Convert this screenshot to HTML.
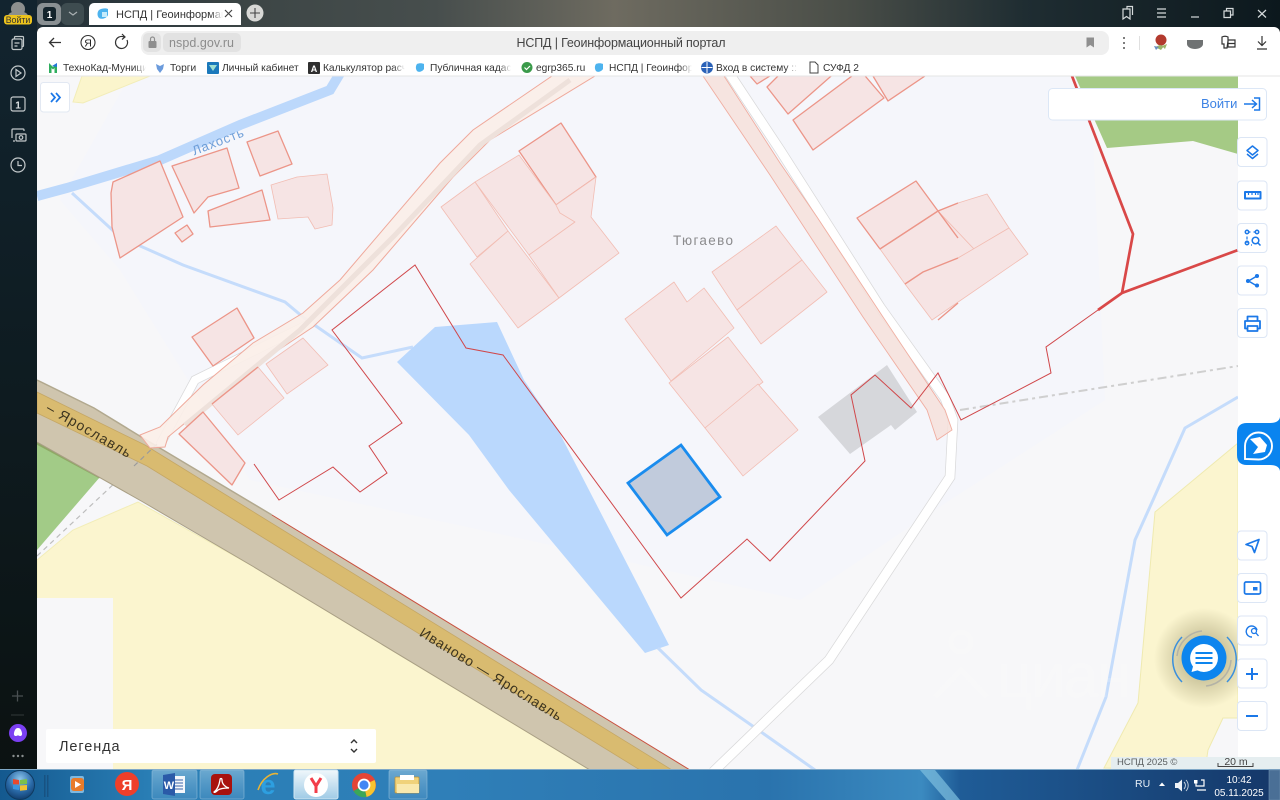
<!DOCTYPE html>
<html><head><meta charset="utf-8"><title>НСПД | Геоинформационный портал</title>
<style>
html,body{margin:0;padding:0;width:1280px;height:800px;overflow:hidden;background:#000}
svg{position:absolute;left:0;top:0;display:block}
text{font-family:"Liberation Sans","Noto Sans CJK SC",sans-serif}
</style></head><body>
<svg width="1280" height="800" viewBox="0 0 1280 800" xmlns="http://www.w3.org/2000/svg">
<defs>
<linearGradient id="top" x1="0" x2="1" y1="0" y2="0">
<stop offset="0" stop-color="#1c2a33"/><stop offset=".2" stop-color="#3d4646"/><stop offset=".34" stop-color="#474e4d"/><stop offset=".48" stop-color="#6e6b60"/><stop offset=".66" stop-color="#4a4e48"/><stop offset=".8" stop-color="#1f2d32"/><stop offset="1" stop-color="#0c181d"/>
</linearGradient>
<linearGradient id="side" x1="0" x2="0" y1="0" y2="1">
<stop offset="0" stop-color="#12242f"/><stop offset=".5" stop-color="#0e1b20"/><stop offset="1" stop-color="#0b1110"/>
</linearGradient>
<linearGradient id="task" x1="0" x2="1" y1="0" y2="0">
<stop offset="0" stop-color="#14598f"/><stop offset=".12" stop-color="#2a7fb6"/><stop offset=".35" stop-color="#2f7fb8"/><stop offset=".6" stop-color="#2a73ad"/><stop offset=".72" stop-color="#3b8ac0"/><stop offset=".75" stop-color="#1f5c97"/><stop offset=".88" stop-color="#1a4a80"/><stop offset="1" stop-color="#153768"/>
</linearGradient>
<linearGradient id="fade" x1="0" x2="1" y1="0" y2="0"><stop offset="0" stop-color="#fff" stop-opacity="0"/><stop offset="1" stop-color="#fff"/></linearGradient>
<linearGradient id="btn" x1="0" x2="0" y1="0" y2="1"><stop offset="0" stop-color="#8fc0de" stop-opacity=".65"/><stop offset="1" stop-color="#4f93c4" stop-opacity=".5"/></linearGradient>
<linearGradient id="btnW" x1="0" x2="0" y1="0" y2="1"><stop offset="0" stop-color="#f0f7fb"/><stop offset="1" stop-color="#9fcbe6"/></linearGradient>
<radialGradient id="orb" cx=".5" cy=".3" r=".7"><stop offset="0" stop-color="#8ec6ec"/><stop offset=".6" stop-color="#2a6aa8"/><stop offset="1" stop-color="#123f70"/></radialGradient>
<radialGradient id="glow"><stop offset=".45" stop-color="#6b6233" stop-opacity=".3"/><stop offset="1" stop-color="#6b6233" stop-opacity="0"/></radialGradient>
<clipPath id="map"><rect x="37" y="76" width="1201" height="694"/></clipPath>
</defs>

<!-- chrome -->
<rect width="1280" height="30" fill="url(#top)"/>
<rect x="0" y="0" width="37" height="800" fill="url(#side)"/>

<!-- MAP -->
<rect x="37" y="76" width="1243" height="694" fill="#f7f7f9"/>
<g clip-path="url(#map)">
<polygon points="130,76 1090,76 1105,400 950,500 800,600 620,560 250,480 120,270 60,200" fill="#f5f6fb"/>
<!-- yellow -->
<polygon points="82,76 73,102 83,103 150,76" fill="#fbf5cc" stroke="#f2edb8" stroke-width="1"/>
<polygon points="37,560 73,530 138,502 254,567 590,770 37,770" fill="#fbf5cf" stroke="#f2edb8" stroke-width="1"/>
<rect x="37" y="598" width="76" height="172" fill="#f7f7f9"/>
<polygon points="1238,443 1155,512 1138,703 1104,768 1205,770 1208,750 1223,718 1238,718" fill="#fbf5cf" stroke="#efeab0" stroke-width="1"/>
<!-- green -->
<polygon points="37,443 100,477 37,550" fill="#a2cb87"/>
<polyline points="37,443 100,477" fill="none" stroke="#8fa866" stroke-width="3"/>
<polygon points="1075,76 1107,148 1193,141 1238,154 1238,76" fill="#a5ca85"/>
<!-- water -->
<polyline points="72,193 120,237 183,265 285,302 303,317 362,358 413,347" fill="none" stroke="#c5dcfb" stroke-width="3"/>
<polyline points="37,196 67,188 160,160 240,125 330,90 342,70" fill="none" stroke="#bcd8fb" stroke-width="10"/>
<polygon points="397,362 435,327 497,322 524,380 558,430 669,645 645,653 509,490 469,435" fill="#bad8fd"/>
<polyline points="658,648 701,690 754,727 815,770" fill="none" stroke="#c5dcfb" stroke-width="3"/>
<polyline points="1238,397 1185,428 1153,500 1135,540 1106,697 1077,770" fill="none" stroke="#c5dcfb" stroke-width="3"/>
<!-- dashed -->
<polyline points="960,410 1238,366" fill="none" stroke="#cfcfcf" stroke-width="2" stroke-dasharray="9 4 3 4"/>
<polyline points="37,556 134,465" fill="none" stroke="#bdbdbd" stroke-width="1.2" stroke-dasharray="5 4"/>
<!-- roads white -->
<polyline points="727,70 780,150 880,307 945,398 953,420 950,477 829,660 713,772" fill="none" stroke="#d9d9da" stroke-width="10.500"/>
<polyline points="727,70 780,150 880,307 945,398 953,420 950,477 829,660 713,772" fill="none" stroke="#fff" stroke-width="9"/>
<polyline points="160,445 195,380 313,322" fill="none" stroke="#d9d9da" stroke-width="9.500"/>
<polyline points="160,445 195,380 313,322" fill="none" stroke="#fff" stroke-width="8"/>
<!-- Highway -->
<polygon points="37,380 94,408 143,438 272,515 690,770 590,770 254,567 143,502 37,442" fill="#cfc5ae"/>
<polygon points="37,392 145,445 672,770 640,770 147,466 37,413" fill="#d9bb70" stroke="#c5a765" stroke-width=".8"/>
<polyline points="37,380 94,408 143,438 272,515" fill="none" stroke="#b2a98f" stroke-width="1.5"/>
<polyline points="37,442 143,502 254,567 590,770" fill="none" stroke="#a99f85" stroke-width="1"/>
<polyline points="272,515 690,770" fill="none" stroke="#c9503f" stroke-width="1"/>
<polyline points="134,466 157,444" fill="none" stroke="#9b9b9b" stroke-width="1.2" stroke-dasharray="5 4"/>
<!-- pink bands -->
<polygon points="140,435 160,427 203,385 253,343 303,313 340,280 440,163 473,130 552,76 595,76 490,140 453,177 373,270 313,327 253,367 168,437 165,447 150,448" fill="#fbeee8" fill-opacity=".9" stroke="#efa99b" stroke-width="1"/>
<polyline points="185,425 300,330 395,235 480,145 570,80" fill="none" stroke="#eee1db" stroke-width="5"/>
<polygon points="703,76 770,175 817,247 863,317 927,410 937,440 952,430 945,410 883,317 817,217 780,163 724,76" fill="#f6e0db" fill-opacity=".85" stroke="#f0aea1" stroke-width=".9"/>
<!-- plots -->
<g fill="#f6e4e4" stroke="#ec9588" stroke-width="1.300" stroke-linejoin="round">
<polygon points="113,182 160,161 183,217 120,258 112,227 111,193"/>
<polygon points="172,166 227,148 239,188 208,197 194,213"/>
<polygon points="247,142 278,131 292,164 260,176"/>
<polygon points="175,233 187,225 193,234 182,242"/>
<polygon points="208,211 262,190 270,220 210,227"/>
<polygon points="192,337 237,308 254,338 213,366"/>
<polygon points="179,434 203,412 245,463 232,485"/>
<polygon points="519,151 561,123 596,177 556,205"/>
<polygon points="857,218 916,181 938,211 880,249"/>
<polygon points="767,87 784,70 838,70 788,114"/>
<polygon points="793,120 860,70 884,98 813,150"/>
<polygon points="873,76 888,101 925,76"/>
<polygon points="750,76 757,84 770,76"/>
</g>
<g fill="#f6e4e4" stroke="#f2bdb3" stroke-width=".8" stroke-linejoin="round">
<polygon points="271,185 297,177 327,174 333,208 332,225 315,229 308,217 278,219"/>
<polygon points="212,404 258,367 284,398 238,435"/>
<polygon points="266,364 303,338 328,365 287,394"/>
<polygon points="475,182 519,155 556,205 560,213 567,210 575,222 529,255"/>
<polygon points="441,207 475,182 508,231 477,257"/>
<polygon points="470,264 508,231 559,298 518,328"/>
<polygon points="575,222 560,213 556,205 596,177 591,217 619,253 559,298 529,255"/>
<polygon points="625,319 674,282 687,302 704,288 734,328 671,381"/>
<polygon points="669,383 728,337 763,382 705,428"/>
<polygon points="705,428 758,384 798,430 743,476"/>
<polygon points="712,272 776,226 802,260 737,310"/>
<polygon points="737,310 802,260 827,292 761,344"/>
<polygon points="880,249 938,211 974,249 958,258 923,272 905,284"/>
<polygon points="938,211 958,203 987,194 1009,228 974,249"/>
<polygon points="905,284 923,272 958,258 1009,228 1028,254 932,320"/>
</g>
<g fill="none" stroke="#ec9588" stroke-width="1.400">
<polyline points="880,249 938,211 958,203"/>
<polyline points="938,211 958,238"/>
<polyline points="905,284 923,272 958,258"/>
<polyline points="938,320 958,303"/>
<polyline points="212,404 258,367"/>
</g>
<!-- gray building -->
<polygon points="818,417 887,365 917,412 895,430 891,425 850,454" fill="#d6d7db"/>
<!-- red -->
<g fill="none" stroke="#d0474a" stroke-width="1" stroke-linejoin="miter">
<polyline points="254,464 279,500 333,467 360,492 387,473 369,446 402,423 332,330 415,265 466,348 503,355 681,598 747,539 770,561 865,461 851,395 875,375 911,408 938,373 961,420 1051,373 1046,347 1098,310"/>
</g>
<g fill="none" stroke="#d94848" stroke-width="2.700" stroke-linejoin="miter">
<polyline points="1098,310 1122,293 1238,250"/>
<polyline points="1122,293 1133,234 1072,76"/>
</g>
<!-- selected -->
<polygon points="628,483 681,445 720,497 667,535" fill="#c1cbdc" stroke="#1a8cee" stroke-width="2.800" stroke-linejoin="miter"/>
<!-- watermark -->
<text x="997" y="697" font-size="62" fill="#fff" opacity=".14" textLength="134">циан</text>
<path d="M935 697l26-27 26 27M961 632a10 10 0 1 1-.01 0" fill="none" stroke="#fff" stroke-width="5" opacity=".12"/>
<!-- labels -->
<text x="218" y="146" font-size="13" fill="#6e9ed8" text-anchor="middle" transform="rotate(-21 218 142)" textLength="54">Лахость</text>
<text x="703" y="245" font-size="13.500" fill="#8b8b8d" text-anchor="middle" textLength="60">Тюгаево</text>
<text x="89" y="435" font-size="14" fill="#3d3520" text-anchor="middle" transform="rotate(30 89 430)" textLength="95">– Ярославль</text>
<text x="491" y="679" font-size="14" fill="#3d3520" text-anchor="middle" transform="rotate(31.600 491 674)" textLength="164">Иваново — Ярославль</text>
<circle cx="1204" cy="658" r="50" fill="url(#glow)"/>
</g>

<!-- Right white column -->
<rect x="1238" y="76" width="42" height="694" fill="#fff"/>
<!-- scale strip -->
<rect x="1111" y="757" width="169" height="13" fill="#e5eef0"/>
<text x="1117" y="765" font-size="9.500" fill="#5a5f60">НСПД 2025 ©</text>
<text x="1236" y="765" font-size="10.500" fill="#444" text-anchor="middle">20 m</text>
<path d="M1218 763v3.500h35v-3.500" fill="none" stroke="#444" stroke-width="1"/>

<!-- Login panel -->
<rect x="1048.500" y="88.500" width="218" height="31.500" rx="4" fill="#fff" stroke="#dce7f6"/>
<text x="1201" y="108" font-size="13" fill="#3d83e4">Войти</text>
<path d="M1244 104h12M1252 100l4.500 4-4.500 4M1254 98h5.500v12H1254" fill="none" stroke="#1b78e8" stroke-width="1.500"/>

<!-- Expand -->
<rect x="40.500" y="82.500" width="29" height="29.500" rx="3" fill="#fff" stroke="#e2e8f2"/>
<path d="M51 93l4 4.500-4 4.500M56 93l4 4.500-4 4.500" fill="none" stroke="#1b78e8" stroke-width="1.700"/>

<!-- Legend -->
<rect x="46" y="729" width="330" height="34" rx="2" fill="#fff"/>
<text x="59" y="751" font-size="14.500" letter-spacing=".9" fill="#333">Легенда</text>
<path d="M351 743l3-3 3 3M351 749l3 3 3-3" fill="none" stroke="#333" stroke-width="1.400"/>

<!-- right buttons -->
<g fill="#fff" stroke="#dce6f5">
<rect x="1237.500" y="137.500" width="29.500" height="29" rx="3.500"/>
<rect x="1237.500" y="181" width="29.500" height="29" rx="3.500"/>
<rect x="1237.500" y="223.500" width="29.500" height="29" rx="3.500"/>
<rect x="1237.500" y="266" width="29.500" height="29" rx="3.500"/>
<rect x="1237.500" y="308.500" width="29.500" height="29" rx="3.500"/>
<rect x="1237.500" y="531" width="29.500" height="29" rx="3.500"/>
<rect x="1237.500" y="573.500" width="29.500" height="29" rx="3.500"/>
<rect x="1237.500" y="616" width="29.500" height="29" rx="3.500"/>
<rect x="1237.500" y="659" width="29.500" height="29" rx="3.500"/>
<rect x="1237.500" y="701.500" width="29.500" height="29" rx="3.500"/>
</g>
<g fill="none" stroke="#1b78e8" stroke-width="1.500" stroke-linejoin="round">
<path d="M1252.500 146l5.500 4.500-5.500 4.500-5.500-4.500z"/><path d="M1247 154l5.500 4.500 5.500-4.500"/>
<rect x="1245" y="192" width="15.500" height="6.500" stroke-width="2"/><path d="M1248.500 192v3M1252 192v3M1255.500 192v3M1258 192v3" stroke-width="1.200"/>
<path d="M1248 232h2.500M1253.500 232h2M1247 236.500v3M1247 242v1M1251 245h1" stroke-width="1.200"/>
<circle cx="1247" cy="232" r="1.700"/><circle cx="1257" cy="232" r="1.700"/><circle cx="1247" cy="243" r="1.700"/>
<circle cx="1255.500" cy="240.500" r="3.300"/><path d="M1258 243l2.500 2.500"/>
<path d="M1257 276l-8.500 5 8.500 5"/><circle cx="1257" cy="276" r="1.300" fill="#1b78e8"/><circle cx="1248" cy="281" r="1.300" fill="#1b78e8"/><circle cx="1257" cy="285.500" r="1.300" fill="#1b78e8"/>
<path d="M1247.500 321v-4.500h10v4.500M1247.500 328.500h-2.500v-7.500h15v7.500h-2.500M1247.500 326h10v5h-10z" stroke-width="1.800"/>
<path d="M1246 544.500l13-5-4.500 13-2.500-6z" stroke-width="1.700"/>
<rect x="1244.500" y="582" width="16" height="12" rx="1.500" stroke-width="1.700"/><rect x="1253" y="587" width="4.500" height="3.500" fill="#1b78e8" stroke="none"/>
<path d="M1257 630a5.500 5.500 0 1 0-5 7" stroke-width="1.400"/><circle cx="1254" cy="631" r="2.500" stroke-width="1.300"/><path d="M1256 633l2.500 3" stroke-width="1.300"/>
<path d="M1252 668v12M1246 674h12" stroke-width="2"/>
<path d="M1246 716h12" stroke-width="2"/>
</g>

<!-- Blue tab -->
<path d="M1280 417Q1279 423 1270 423H1247Q1237 423 1237 433V455Q1237 465 1247 465H1270Q1279 465 1280 471Z" fill="#0a84ef"/>
<path d="M1245 459v-13a13.500 13.500 0 1 1 13.500 13.500z" fill="none" stroke="#fff" stroke-width="1.900"/>
<path d="M1250 439l10-2 7 8-2 7-12 2 5-7z" fill="#fff"/>
<path d="M1255 455h12l1-4" fill="none" stroke="#0a84ef" stroke-width="1"/>

<!-- chat -->
<circle cx="1204" cy="658" r="22.500" fill="#0d85ee"/>
<path d="M1182 637a32 32 0 0 0 0 45M1227 637a32 32 0 0 1 0 45" fill="none" stroke="#3a8fdd" stroke-width="1.500"/>
<path d="M1177 656a28 28 0 0 1 25-25M1231 660a28 28 0 0 1-25 26" fill="none" stroke="#b4b3a6" stroke-width="1.500"/>
<path d="M1204 644a14 14 0 1 1-6.500 26.400l-6 1.600 1.500-5.500a14 14 0 0 1 11-22.500z" fill="#fff"/>
<path d="M1195.500 653h17M1195.500 658h17M1195.500 663h17" stroke="#0d85ee" stroke-width="2"/>

<!-- Top tabs -->
<rect x="37" y="3" width="24" height="22" rx="6" fill="#8a9093"/>
<rect x="43" y="7" width="13" height="14" rx="3" fill="#14242c"/>
<text x="49.500" y="18" font-size="10" font-weight="bold" fill="#fff" text-anchor="middle">1</text>
<rect x="61" y="3" width="23" height="22" rx="6" fill="#3e4c50"/>
<path d="M69 12l4 3 4-3" fill="none" stroke="#aab1b3" stroke-width="1.200"/>
<path d="M89 25V8a5 5 0 0 1 5-5h142a5 5 0 0 1 5 5v17z" fill="#fff"/>
<path d="M99 10c3-2 7-2 9-1v6c-1 3-6 5-9 3-2-2-2-6 0-8z" fill="#4db3ee"/><path d="M102 12h5v5h-5z" fill="#c6ebfb"/>
<text x="116" y="18" font-size="11" fill="#333">НСПД | Геоинформаци</text>
<rect x="210" y="6" width="13" height="16" fill="url(#fade)"/>
<rect x="223" y="6" width="17" height="16" fill="#fff"/>
<path d="M225 10l7 7M232 10l-7 7" stroke="#444" stroke-width="1.200"/>
<circle cx="255" cy="13" r="8.500" fill="#d8d8d6"/>
<path d="M250 13h10M255 8v10" stroke="#444" stroke-width="1.100"/>

<!-- Top-right controls -->
<g fill="none" stroke="#d5dadb" stroke-width="1.200">
<path d="M1123 16V9h7v10l-3.500-2.500-3.500 2.500zM1127 9V6.500h5.500V15"/>
<path d="M1157 9h9M1157 13h9M1157 17h9"/>
<path d="M1191 17h8"/>
<path d="M1224 11h6.500v6.500H1224zM1226.500 11V8.500h6.500v6.500h-2.500"/>
<path d="M1258 10l8 7.500M1266 10l-8 7.500"/>
</g>

<!-- Left side -->
<circle cx="18" cy="9" r="7" fill="#8c8f8e"/><ellipse cx="18" cy="16" rx="10" ry="5" fill="#8c8f8e"/>
<rect x="4" y="15" width="28" height="9.500" rx="3" fill="#ecc31c"/>
<text x="18" y="23" font-size="8.800" fill="#333" text-anchor="middle">Войти</text>
<g fill="none" stroke="#c2c8ca" stroke-width="1.200">
<rect x="12" y="39" width="10" height="10.500" rx="1.500"/><path d="M14.500 39v-1.500a1 1 0 0 1 1-1h7a1 1 0 0 1 1 1v8a1 1 0 0 1-1 1H22M14.500 43h5M14.500 46h3"/>
<circle cx="18" cy="73" r="7"/><path d="M16 69.500l5 3.500-5 3.500z"/>
<rect x="11" y="97" width="14" height="14" rx="2"/>
<path d="M12 138v-8a1 1 0 0 1 1-1h10a1 1 0 0 1 1 1v1M15 141h-2M17 134h8a1 1 0 0 1 1 1v5a1 1 0 0 1-1 1h-8a1 1 0 0 1-1-1v-5a1 1 0 0 1 1-1z"/><circle cx="21" cy="137.500" r="1.800"/>
<circle cx="18" cy="165" r="7"/><path d="M18 161v4.500h4"/>
</g>
<text x="18" y="108.500" font-size="10" font-weight="bold" fill="#dfe3e4" text-anchor="middle">1</text>
<path d="M12 696h11M17.500 690.500v11" stroke="#4a5052" stroke-width="1.300"/>
<path d="M11 715h13" stroke="#333a3a" stroke-width="1"/>
<circle cx="18" cy="733" r="9" fill="#7b3ff2"/>
<path d="M18 728c2.500 0 3.500 2.500 4 5 .4 2-.5 3-2 3-1 0-1.200-.6-2-.6s-1 .6-2 .6c-1.500 0-2.400-1-2-3 .5-2.500 1.500-5 4-5z" fill="#fff"/>
<circle cx="13.500" cy="756" r="1.200" fill="#8a8f90"/><circle cx="18" cy="756" r="1.200" fill="#8a8f90"/><circle cx="22.500" cy="756" r="1.200" fill="#8a8f90"/>

<!-- Toolbar -->
<path d="M37 76V33a6 6 0 0 1 6-6h1231a6 6 0 0 1 6 6v43z" fill="#fff"/>
<rect x="37" y="75.500" width="1243" height="1" fill="#e4e5e6"/>
<path d="M61 42.500H49.500M54 38l-4.500 4.500 4.500 4.500" fill="none" stroke="#333" stroke-width="1.300"/>
<circle cx="88" cy="42.500" r="7" fill="none" stroke="#333" stroke-width="1.100"/>
<text x="88" y="46.500" font-size="10.500" fill="#222" text-anchor="middle">Я</text>
<path d="M127 40a6 6 0 1 1-3-3M122 34l3 3-3 2.500" fill="none" stroke="#333" stroke-width="1.200"/>
<rect x="141" y="31" width="968" height="24" rx="8" fill="#efefef"/>
<rect x="143" y="33" width="18" height="19" rx="5" fill="#e2e2e2"/>
<rect x="163" y="33" width="78" height="19" rx="5" fill="#e2e2e2"/>
<rect x="148.500" y="41" width="8" height="7" rx="1" fill="#8e8e8e"/>
<path d="M150.500 41v-2a2 2 0 0 1 4 0v2" fill="none" stroke="#8e8e8e" stroke-width="1.200"/>
<text x="169" y="47" font-size="12.500" fill="#8c8c8c" textLength="65">nspd.gov.ru</text>
<text x="621" y="47" font-size="12.500" fill="#444" text-anchor="middle" textLength="209">НСПД | Геоинформационный портал</text>
<path d="M1086.500 37.500h7.500v10l-3.750-2.500-3.750 2.500z" fill="#8f8f8f"/>
<circle cx="1124" cy="38" r="1" fill="#555"/><circle cx="1124" cy="43" r="1" fill="#555"/><circle cx="1124" cy="48" r="1" fill="#555"/>
<path d="M1139.500 36v14" stroke="#e0e0e0"/>
<circle cx="1161" cy="40" r="5.500" fill="#b33a2e"/><path d="M1155 47l5-2 4 1-3 4zM1162 46l5-2-2 5z" fill="#9db46a"/><path d="M1154 46l5 1-3 3z" fill="#6a8fc0"/>
<path d="M1187 40h16v4c0 3-4 5-8 5s-8-2-8-5z" fill="#6f7273"/>
<path d="M1222 37c2-1 4-1 6 0v4l-1 7h-3v-4h-2zM1228 40h7v7h-7zM1228 43.500h7" fill="none" stroke="#333" stroke-width="1.200"/>
<path d="M1262 36v9M1258 41.500l4 4 4-4M1257 49h10" fill="none" stroke="#333" stroke-width="1.200"/>

<!-- Bookmarks -->
<g font-size="10.200" fill="#333">
<text x="63" y="71">ТехноКад-Муници</text>
<text x="170" y="71">Торги</text>
<text x="222" y="71">Личный кабинет</text>
<text x="323" y="71">Калькулятор расч</text>
<text x="430" y="71">Публичная кадаст</text>
<text x="536" y="71">egrp365.ru</text>
<text x="609" y="71">НСПД | Геоинфор</text>
<text x="716" y="71">Вход в систему ::</text>
<text x="823" y="71">СУФД 2</text>
</g>
<rect x="134" y="60" width="12" height="14" fill="url(#fade)"/><rect x="146" y="60" width="6" height="14" fill="#fff"/>
<rect x="393" y="60" width="12" height="14" fill="url(#fade)"/><rect x="405" y="60" width="9" height="14" fill="#fff"/>
<rect x="499" y="60" width="12" height="14" fill="url(#fade)"/><rect x="511" y="60" width="9" height="14" fill="#fff"/>
<rect x="680" y="60" width="12" height="14" fill="url(#fade)"/><rect x="692" y="60" width="8" height="14" fill="#fff"/>
<rect x="786" y="60" width="12" height="14" fill="url(#fade)"/><rect x="798" y="60" width="10" height="14" fill="#fff"/>
<!-- favicons -->
<path d="M49 73v-10l4 4 4-4v10h-2.500v-5l-1.500 1.500-1.500-1.500v5z" fill="#2fae5e"/><path d="M52 66l5-3v4z" fill="#2275d8"/>
<path d="M156 64l4 2 4-2-1 5-3 4-3-4z" fill="#6b9bdc"/>
<rect x="207" y="62" width="12" height="12" rx="1" fill="#1b79bb"/><path d="M209 65h8l-4 6z" fill="#9fe0d2"/>
<rect x="308" y="62" width="12" height="12" rx="1" fill="#2f2f2f"/><text x="314" y="72" font-size="9" font-weight="bold" fill="#fff" text-anchor="middle">A</text>
<path d="M417 64c2-1 5-1 7 0v5c-1 2-5 4-7 2-1.500-2-1.500-5 0-7z" fill="#4db3ee"/>
<circle cx="527" cy="67.500" r="5.500" fill="#3a9a4a"/><path d="M524.500 67.500l2 2 3.500-3.500" fill="none" stroke="#fff" stroke-width="1.200"/>
<path d="M596 64c2-1 5-1 7 0v5c-1 2-5 4-7 2-1.500-2-1.500-5 0-7z" fill="#4db3ee"/>
<circle cx="707" cy="67.500" r="6" fill="#2a62b8"/><path d="M701.500 67.500h11M707 62v11" stroke="#fff"/>
<path d="M810 62h5l3 3v8h-8z" fill="#fff" stroke="#444"/>

<!-- Taskbar -->
<rect x="0" y="769" width="1280" height="31" fill="url(#task)"/>
<rect x="0" y="769" width="1280" height="1" fill="#7fa8c7"/>
<path d="M920 770h15l25 30h-14z" fill="#7fc0e0" opacity=".7"/>
<circle cx="20" cy="785" r="14.500" fill="url(#orb)" stroke="#0f3a60"/>
<path d="M13 779l6 1v4.500l-6-.4z" fill="#e8492e"/><path d="M20 780l7-1v5l-7 .4z" fill="#7cc14a"/><path d="M13 785l6 .4v4.600l-6-1z" fill="#3a96e0"/><path d="M20 785.500l7-.5v5l-7 .8z" fill="#f2c230"/>
<g fill="#174a78"><rect x="44" y="775" width="1.500" height="22" opacity=".7"/><rect x="47" y="775" width="1.500" height="22" opacity=".7"/></g>

<rect x="152" y="770" width="45" height="29" rx="2" fill="url(#btn)" stroke="#8dbad8" stroke-opacity=".6"/>
<rect x="200" y="770" width="44" height="29" rx="2" fill="url(#btn)" stroke="#8dbad8" stroke-opacity=".6"/>
<rect x="294" y="770" width="44" height="29" rx="2" fill="url(#btnW)" stroke="#cfe5f2"/>
<rect x="389" y="770" width="38" height="29" rx="2" fill="url(#btn)" stroke="#8dbad8" stroke-opacity=".6"/>

<rect x="70" y="776" width="14" height="17" rx="2" fill="#7db8e0"/>
<rect x="71" y="778" width="13" height="13" rx="3" fill="#e87b2a"/><path d="M75 781l6 3.500-6 3.500z" fill="#fff"/>
<circle cx="127" cy="784" r="12" fill="#ee3f2a"/>
<text x="127" y="790" font-size="15" font-weight="bold" fill="#fff" text-anchor="middle">Я</text>
<rect x="172" y="776" width="13" height="17" fill="#f4f7fb"/>
<path d="M175 780h8M175 783h8M175 786h8M175 789h8" stroke="#3a63a8"/>
<path d="M163 775l12-2v23l-12-2z" fill="#2a5aa8"/>
<text x="169" y="789" font-size="11" font-weight="bold" fill="#fff" text-anchor="middle">W</text>
<rect x="211" y="774" width="21" height="21" rx="4" fill="#a8120e"/>
<path d="M214 792c3-2 5-6 6-12 0-2 2-2 2 0 0 4 3 7 7 8-3 0-8 0-11 2-2 2-4 3-4 2z" fill="none" stroke="#fff" stroke-width="1.300"/>
<text x="268" y="794" font-size="27" font-weight="bold" fill="#2d9fe0" text-anchor="middle">e</text>
<path d="M258 790c4-12 14-18 20-16" fill="none" stroke="#e9b437" stroke-width="1.600"/>
<circle cx="316" cy="785" r="12" fill="#fff"/>
<path d="M311 778l5 8 5-8M316 786v7" fill="none" stroke="#f23d4a" stroke-width="3"/>
<circle cx="364" cy="785" r="12" fill="#e44536"/>
<path d="M364 785l10.500-5a12 12 0 0 1-8 17z" fill="#f7c42e"/>
<path d="M364 785l2.500 12a12 12 0 0 1-13-6z" fill="#3aa757"/>
<circle cx="364" cy="785" r="5.500" fill="#4285f4" stroke="#fff" stroke-width="1.800"/>
<path d="M396 777h22a1 1 0 0 1 1 1v14a1 1 0 0 1-1 1h-22a1 1 0 0 1-1-1v-14a1 1 0 0 1 1-1z" fill="#f0d27a" stroke="#b98f36" stroke-width=".7"/>
<rect x="397" y="784" width="22" height="9" fill="#f9e9ae"/>
<rect x="400" y="775" width="14" height="5" fill="#fff"/>

<!-- Tray -->
<text x="1135" y="787" font-size="10.500" fill="#e6eef6">RU</text>
<path d="M1159 786l3-3.500 3 3.500z" fill="#fff"/>
<path d="M1175 783h3l4-3.500v12l-4-3.500h-3z" fill="#eef3f8"/>
<path d="M1184 782a5 5 0 0 1 0 7M1186 780a8 8 0 0 1 0 11" fill="none" stroke="#cdd9e5" stroke-width=".9"/>
<rect x="1194" y="780" width="3.500" height="3.500" fill="#fff"/>
<path d="M1196 783v3h8v-6h-3M1197 790h9" fill="none" stroke="#fff" stroke-width="1.200"/>
<text x="1239" y="783" font-size="10" fill="#fff" text-anchor="middle">10:42</text>
<text x="1239" y="796" font-size="10" fill="#fff" text-anchor="middle">05.11.2025</text>
<rect x="1269" y="770" width="11" height="30" fill="#4a6f96" stroke="#6e8fae" stroke-width=".6"/>
</svg>
</body></html>
